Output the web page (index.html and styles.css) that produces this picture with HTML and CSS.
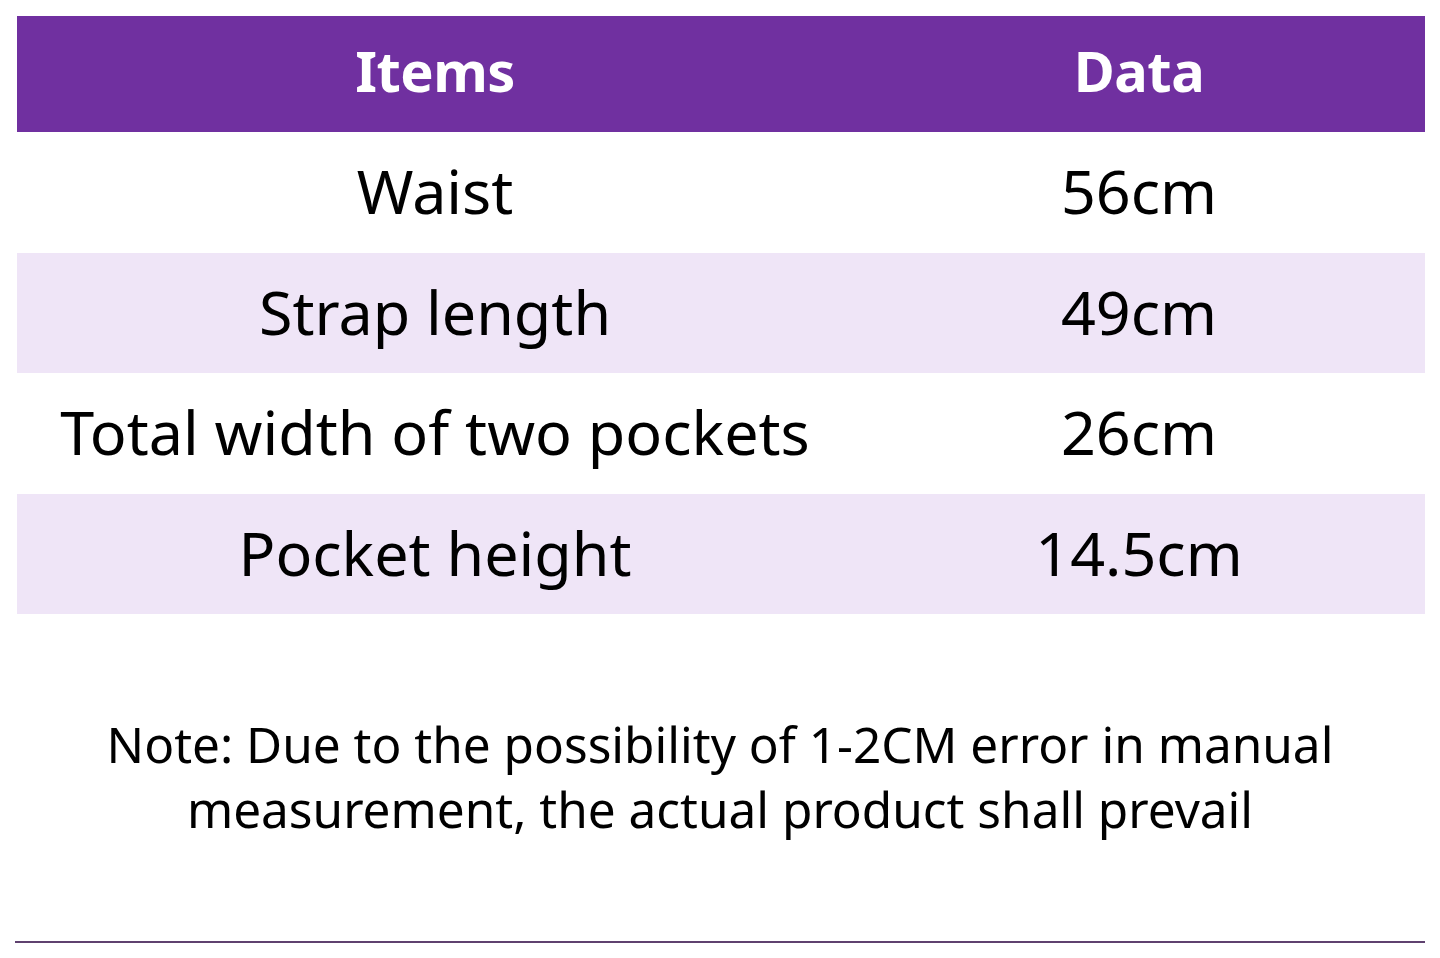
FILE: index.html
```html
<!DOCTYPE html>
<html>
<head>
<meta charset="utf-8">
<link rel="stylesheet" href="styles.css">
</head>
<body>
<main class="page">
  <table class="spec">
    <thead>
      <tr><th class="col-item">Items</th><th class="col-data">Data</th></tr>
    </thead>
    <tbody>
      <tr><td>Waist</td><td>56cm</td></tr>
      <tr class="alt"><td>Strap length</td><td>49cm</td></tr>
      <tr><td>Total width of two pockets</td><td>26cm</td></tr>
      <tr class="alt"><td>Pocket height</td><td>14.5cm</td></tr>
    </tbody>
  </table>
  <p class="note">Note: Due to the possibility of 1-2CM error in manual<br>measurement, the actual product shall prevail</p>
  <hr class="rule">
</main>
</body>
</html>
```
FILE: styles.css
```css
html, body {
  margin: 0;
  padding: 0;
  background: #ffffff;
}
.page {
  width: 1440px;
  height: 958px;
  padding-top: 16px;
  box-sizing: border-box;
  font-family: "Noto Sans", "Open Sans", sans-serif;
  color: #000;
}
.spec {
  margin-left: 17px;
  width: 1408px;
  border-collapse: collapse;
  table-layout: fixed;
}
.col-item { width: 836px; }
.spec th {
  background: #7030a0;
  color: #fff;
  font-weight: 700;
  font-size: 56px;
  letter-spacing: -0.5px;
  height: 107px;
  padding: 0 0 9px;
  text-align: center;
  vertical-align: middle;
}
.spec td {
  font-size: 61px;
  font-weight: 400;
  height: 117px;
  padding: 0 0 3.5px;
  text-align: center;
  vertical-align: middle;
}
.spec tr.alt td {
  background: #efe5f7;
}
.note {
  margin: 98px 0 0;
  text-align: center;
  font-size: 49.5px;
  line-height: 65px;
}
.rule {
  margin: 99px 0 0 15px;
  width: 1410px;
  border: 0;
  height: 2px;
  background: #5f416f;
}
```
